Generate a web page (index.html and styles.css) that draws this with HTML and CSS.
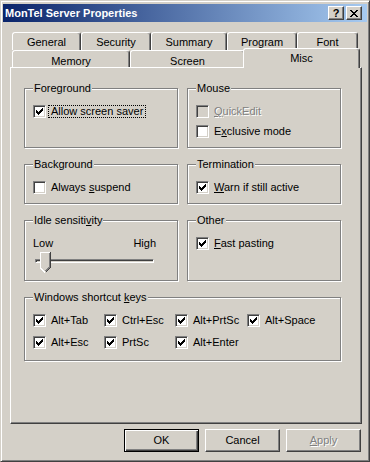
FILE: index.html
```html
<!DOCTYPE html>
<html lang="en">
<head>
  <meta charset="UTF-8" />
  <title>MonTel Server Properties</title>
  <link rel="stylesheet" href="styles.css">
</head>
<body>
  <div class="window">
    <div class="titlebar">
      <span class="title">MonTel Server Properties</span>
      <span class="capbtn help">?</span>
      <span class="capbtn close">
        <svg width="8" height="7" viewBox="0 0 8 7"><path d="M0 0h2v1H0zM6 0h2v1H6zM1 1h2v1H1zM5 1h2v1H5zM2 2h4v1H2zM3 3h2v1H3zM2 4h4v1H2zM1 5h2v1H1zM5 5h2v1H5zM0 6h2v1H0zM6 6h2v1H6z"/></svg>
      </span>
    </div>

    <div class="tabctl">
      <div class="tabrow back">
        <div class="tab tab-general">General</div>
        <div class="tab tab-security">Security</div>
        <div class="tab tab-summary">Summary</div>
        <div class="tab tab-program">Program</div>
        <div class="tab tab-font">Font</div>
      </div>
      <div class="tabrow front">
        <div class="tab tab-memory">Memory</div>
        <div class="tab tab-screen">Screen</div>
        <div class="tab tab-misc active">Misc</div>
      </div>

      <div class="panel">
        <div class="groups">
          <div class="group">
            <div class="group-title">Foreground</div>
            <div class="check-row">
              <span class="cb"><svg class="tick" width="11" height="11" viewBox="0 0 11 11"><path d="M2 4h1v3H2zM3 5h1v3H3zM4 6h1v3H4zM5 5h1v3H5zM6 4h1v3H6zM7 3h1v3H7zM8 2h1v3H8z"/></svg></span>
              <span class="label focus">Allow screen saver</span>
            </div>
          </div>

          <div class="group">
            <div class="group-title">Mouse</div>
            <div class="check-row disabled">
              <span class="cb"></span>
              <span class="label"><u>Q</u>uickEdit</span>
            </div>
            <div class="check-row second">
              <span class="cb"></span>
              <span class="label">E<u>x</u>clusive mode</span>
            </div>
          </div>

          <div class="group">
            <div class="group-title">Background</div>
            <div class="check-row">
              <span class="cb"></span>
              <span class="label">Always <u>s</u>uspend</span>
            </div>
          </div>

          <div class="group">
            <div class="group-title">Termination</div>
            <div class="check-row">
              <span class="cb"><svg class="tick" width="11" height="11" viewBox="0 0 11 11"><path d="M2 4h1v3H2zM3 5h1v3H3zM4 6h1v3H4zM5 5h1v3H5zM6 4h1v3H6zM7 3h1v3H7zM8 2h1v3H8z"/></svg></span>
              <span class="label"><u>W</u>arn if still active</span>
            </div>
          </div>

          <div class="group">
            <div class="group-title">Idle sensiti<u>v</u>ity</div>
            <div class="range-labels">
              <span>Low</span>
              <span>High</span>
            </div>
            <div class="slider">
              <div class="track"></div>
              <svg class="thumb" width="11" height="21" viewBox="0 0 11 21" shape-rendering="crispEdges">
                <path d="M0 0H11V16L5.5 21L0 16Z" fill="#d4d0c8"/>
                <path d="M0.5 16V0.5H10" stroke="#fff" fill="none"/>
                <path d="M0.5 16L5 20.5" stroke="#fff" fill="none"/>
                <path d="M10.5 0V15.5L5.5 20.5" stroke="#404040" fill="none"/>
                <path d="M9.5 1V15L5.5 19" stroke="#808080" fill="none"/>
              </svg>
            </div>
          </div>

          <div class="group">
            <div class="group-title">Other</div>
            <div class="check-row">
              <span class="cb"><svg class="tick" width="11" height="11" viewBox="0 0 11 11"><path d="M2 4h1v3H2zM3 5h1v3H3zM4 6h1v3H4zM5 5h1v3H5zM6 4h1v3H6zM7 3h1v3H7zM8 2h1v3H8z"/></svg></span>
              <span class="label"><u>F</u>ast pasting</span>
            </div>
          </div>

          <div class="group wide">
            <div class="group-title">Windows shortcut <u>k</u>eys</div>
            <div class="keys">
              <div class="check-row"><span class="cb"><svg class="tick" width="11" height="11" viewBox="0 0 11 11"><path d="M2 4h1v3H2zM3 5h1v3H3zM4 6h1v3H4zM5 5h1v3H5zM6 4h1v3H6zM7 3h1v3H7zM8 2h1v3H8z"/></svg></span><span class="label">Alt+Tab</span></div>
              <div class="check-row"><span class="cb"><svg class="tick" width="11" height="11" viewBox="0 0 11 11"><path d="M2 4h1v3H2zM3 5h1v3H3zM4 6h1v3H4zM5 5h1v3H5zM6 4h1v3H6zM7 3h1v3H7zM8 2h1v3H8z"/></svg></span><span class="label">Ctrl+Esc</span></div>
              <div class="check-row"><span class="cb"><svg class="tick" width="11" height="11" viewBox="0 0 11 11"><path d="M2 4h1v3H2zM3 5h1v3H3zM4 6h1v3H4zM5 5h1v3H5zM6 4h1v3H6zM7 3h1v3H7zM8 2h1v3H8z"/></svg></span><span class="label">Alt+PrtSc</span></div>
              <div class="check-row"><span class="cb"><svg class="tick" width="11" height="11" viewBox="0 0 11 11"><path d="M2 4h1v3H2zM3 5h1v3H3zM4 6h1v3H4zM5 5h1v3H5zM6 4h1v3H6zM7 3h1v3H7zM8 2h1v3H8z"/></svg></span><span class="label">Alt+Space</span></div>
              <div class="check-row"><span class="cb"><svg class="tick" width="11" height="11" viewBox="0 0 11 11"><path d="M2 4h1v3H2zM3 5h1v3H3zM4 6h1v3H4zM5 5h1v3H5zM6 4h1v3H6zM7 3h1v3H7zM8 2h1v3H8z"/></svg></span><span class="label">Alt+Esc</span></div>
              <div class="check-row"><span class="cb"><svg class="tick" width="11" height="11" viewBox="0 0 11 11"><path d="M2 4h1v3H2zM3 5h1v3H3zM4 6h1v3H4zM5 5h1v3H5zM6 4h1v3H6zM7 3h1v3H7zM8 2h1v3H8z"/></svg></span><span class="label">PrtSc</span></div>
              <div class="check-row"><span class="cb"><svg class="tick" width="11" height="11" viewBox="0 0 11 11"><path d="M2 4h1v3H2zM3 5h1v3H3zM4 6h1v3H4zM5 5h1v3H5zM6 4h1v3H6zM7 3h1v3H7zM8 2h1v3H8z"/></svg></span><span class="label">Alt+Enter</span></div>
            </div>
          </div>
        </div>
      </div>

      <div class="footer">
        <button class="btn btn-default">OK</button>
        <button class="btn">Cancel</button>
        <button class="btn" disabled><u>A</u>pply</button>
      </div>
    </div>
  </div>
</body>
</html>
```

FILE: styles.css
```css
body {
  margin: 0;
  background-color: #d4d0c8;
  color: #000;
  font-family: "Liberation Sans", Arial, sans-serif;
  font-size: 11px;
  line-height: 13px;
}
.window {
  width: 370px;
  height: 462px;
  box-sizing: border-box;
  border: 1px solid;
  border-color: #d4d0c8 #404040 #404040 #d4d0c8;
  box-shadow: inset 1px 1px #fff, inset -1px -1px #808080;
  padding: 3px 2px 2px;
  background-color: #d4d0c8;
}

/* title bar */
.titlebar {
  height: 18px;
  display: flex;
  align-items: center;
  padding: 0 5px 0 2px;
  background: linear-gradient(to right, #0a246a, #a6caf0);
}
.title {
  flex: 1;
  color: #fff;
  font-weight: bold;
}
.capbtn {
  width: 16px;
  height: 14px;
  box-sizing: border-box;
  border: 1px solid;
  border-color: #fff #404040 #404040 #fff;
  box-shadow: inset -1px -1px #808080;
  background-color: #d4d0c8;
  display: flex;
  align-items: center;
  justify-content: center;
}
.help {
  margin-right: 2px;
  font-weight: bold;
  font-size: 11px;
  line-height: 12px;
}
.close svg {
  margin-left: -1px;
}

/* tabs */
.tabctl {
  margin: 10px 0 0 7px;
  width: 352px;
}
.tabrow {
  display: flex;
  padding-left: 2px;
}
.tab {
  box-sizing: border-box;
  border: 1px solid;
  border-bottom: 0;
  border-color: #fff #404040 transparent #fff;
  border-radius: 3px 3px 0 0;
  box-shadow: inset -1px 0 #808080;
  background-color: #d4d0c8;
  text-align: center;
  white-space: nowrap;
}
.back .tab {
  height: 18px;
  padding-top: 3px;
}
.front .tab {
  height: 17px;
  padding-top: 4px;
}
.tab-general { width: 69px; }
.tab-security { width: 70px; }
.tab-summary { width: 76px; }
.tab-program { width: 70px; }
.tab-font { width: 61px; }
.tab-memory { width: 118px; }
.tab-screen { width: 115px; }
.front .tab.active {
  width: 117px;
  height: 20px;
  margin: -2px -2px -1px;
  padding-top: 3px;
  position: relative;
  z-index: 1;
}

/* page */
.panel {
  width: 352px;
  height: 357px;
  box-sizing: border-box;
  border: 1px solid;
  border-color: #fff #404040 #404040 #fff;
  box-shadow: inset -1px -1px #808080;
  padding: 20px 0 0 13px;
}
.groups {
  display: grid;
  grid-template-columns: 154px 154px;
  grid-template-rows: 60px 40px 61px 64px;
  column-gap: 9px;
  row-gap: 16px;
}
.group {
  box-sizing: border-box;
  border: 1px solid #808080;
  box-shadow: inset 1px 1px #fff, 1px 1px #fff;
  padding-left: 8px;
}
.group.wide {
  grid-column: 1 / 3;
}
.group-title {
  display: table;
  margin-top: -7px;
  padding: 0 1px;
  background-color: #d4d0c8;
}

/* checkboxes */
.check-row {
  display: flex;
  align-items: flex-start;
  margin-top: 10px;
  white-space: nowrap;
}
.check-row.second {
  margin-top: 7px;
}
.cb {
  flex: none;
  width: 13px;
  height: 13px;
  box-sizing: border-box;
  border: 1px solid;
  border-color: #808080 #fff #fff #808080;
  box-shadow: inset 1px 1px #404040, inset -1px -1px #d4d0c8;
  background-color: #fff;
}
.tick {
  display: block;
}
.label {
  margin-left: 5px;
}
.label.focus {
  margin-left: 2px;
  padding: 0 2px;
  line-height: 11px;
  border: 1px dotted #000;
}
.disabled .cb {
  background-color: #d4d0c8;
}
.disabled .label {
  color: #808080;
  text-shadow: 1px 1px #fff;
}
.keys {
  display: grid;
  grid-template-columns: 71px 71px 72px auto;
  row-gap: 9px;
  margin-top: 10px;
}
.keys .check-row {
  margin-top: 0;
}

/* slider */
.range-labels {
  display: flex;
  justify-content: space-between;
  width: 123px;
  margin-top: 10px;
}
.slider {
  position: relative;
  width: 119px;
  height: 21px;
  margin: 2px 0 0 2px;
}
.track {
  height: 4px;
  box-sizing: border-box;
  border: 1px solid;
  border-color: #808080 #fff #fff #808080;
  box-shadow: inset 1px 1px #404040;
  position: relative;
  top: 7px;
}
.thumb {
  position: absolute;
  left: 5px;
  top: 0;
}

/* buttons */
.footer {
  display: flex;
  justify-content: flex-end;
  gap: 6px;
  width: 351px;
  margin-top: 5px;
}
.btn {
  width: 75px;
  height: 23px;
  box-sizing: border-box;
  padding: 0;
  border: 1px solid;
  border-color: #fff #404040 #404040 #fff;
  border-radius: 0;
  box-shadow: inset -1px -1px #808080;
  background-color: #d4d0c8;
  color: #000;
  font: inherit;
  line-height: 13px;
}
.btn-default {
  border-color: #000;
  box-shadow: inset 1px 1px #fff, inset -1px -1px #404040, inset -2px -2px #808080;
}
.btn:disabled {
  color: #808080;
  text-shadow: 1px 1px #fff;
}
```
